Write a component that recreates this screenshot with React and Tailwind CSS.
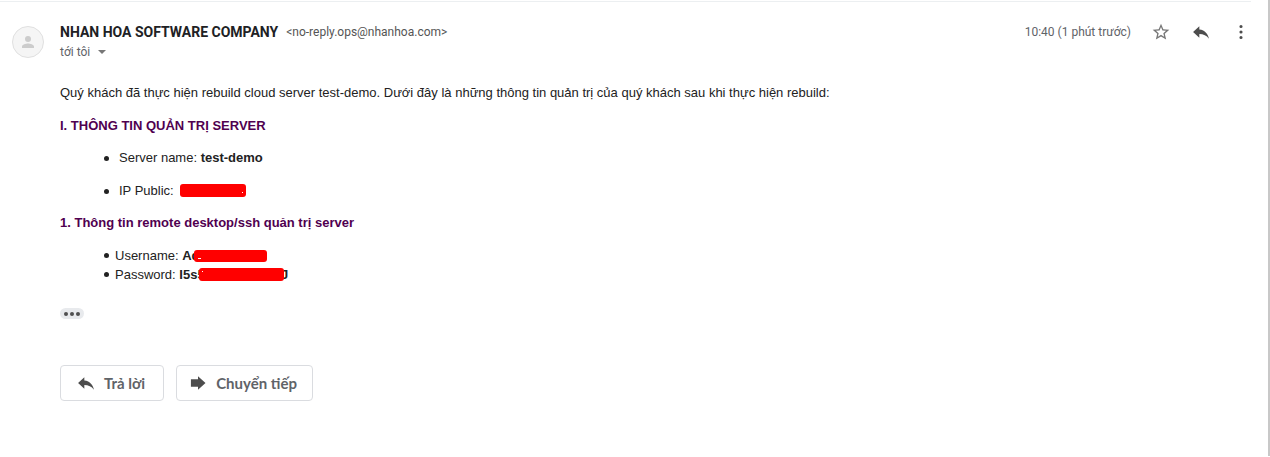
const REPLY_PATH = 'M10 9V5l-7.500 7 7.500 7v-4.500c5 0 8.700 1.800 11.500 5.500-1-5-4.500-10.500-11.500-11z';

function Icon({ path, className = '' }) {
  return (
    <svg viewBox="0 0 24 24" className={`size-5 shrink-0 fill-current ${className}`} aria-hidden="true">
      <path d={path} />
    </svg>
  );
}

function IconButton({ label, path, className = 'text-[#4d4d4d]' }) {
  return (
    <button type="button" aria-label={label} className={`grid size-5 place-items-center ${className}`}>
      <Icon path={path} />
    </button>
  );
}

function Redaction({ children, className, speck }) {
  return (
    <b className="relative inline-block">
      {children}
      <span className={`absolute rounded-[3px] bg-[#ff0000] ${className}`}>
        <span className={`absolute h-px bg-white ${speck}`} />
      </span>
    </b>
  );
}

function Bullet({ gap, children }) {
  return (
    <li className={`flex items-center ${gap}`}>
      <span className="size-[5px] shrink-0 rounded-full bg-[#222222]" />
      <span>{children}</span>
    </li>
  );
}

function ActionButton({ path, className, children }) {
  return (
    <button
      type="button"
      className={`flex h-9 items-center gap-2 rounded border border-[#dadce0] font-['Lato',sans-serif] text-[15px] font-bold text-[#5f6368] ${className}`}
    >
      <Icon path={path} className="text-[#4d4d4d]" />
      {children}
    </button>
  );
}

export default function App() {
  return (
    <div className="flex min-h-screen flex-col bg-white pb-px font-['Roboto',sans-serif] text-[#222222]">
      <div className="flex grow border-r-2 border-[#c8c8c8]">
        <article className="mr-[17px] flex grow flex-col pt-px">
          <div className="border-t border-[#eceff1]" />
          <header className="flex pt-5 pl-3">
            <div className="mt-1 grid size-8 shrink-0 place-items-center rounded-full border border-[#e0e0e0] bg-[#f5f5f5] text-[#cccccc]">
              <svg viewBox="0 0 24 24" className="size-[18px] fill-current" aria-hidden="true">
                <path d="M12 12a4 4 0 1 0 0-8 4 4 0 0 0 0 8zm0 2c-2.700 0-8 1.300-8 4v2h16v-2c0-2.700-5.300-4-8-4z" />
              </svg>
            </div>
            <div className="ml-4 grow">
              <h3 className="flex h-5 items-center gap-2 text-sm font-bold text-[#202124]">
                NHAN HOA SOFTWARE COMPANY
                <span className="text-xs font-normal text-[#555555]">&lt;no-reply.ops@nhanhoa.com&gt;</span>
              </h3>
              <button type="button" className="flex h-5 items-center gap-2 text-xs text-[#5f6368]">
                tới tôi
                <svg viewBox="0 0 8 4" className="h-1 w-2 fill-[#777777]" aria-hidden="true">
                  <path d="M0 0h8L4 4z" />
                </svg>
              </button>
            </div>
            <div className="flex h-5 items-center gap-5 text-xs text-[#5f6368]">
              <time>10:40 (1 phút trước)</time>
              <IconButton
                label="Gắn dấu sao"
                className="text-[#777777]"
                path="M22 9.240l-7.190-.62L12 2 9.190 8.630 2 9.240l5.460 4.730L5.820 21 12 17.270 18.180 21l-1.630-7.030L22 9.240zM12 15.400l-3.760 2.270 1-4.280-3.320-2.880 4.380-.38L12 6.100l1.710 4.040 4.380.38-3.320 2.880 1 4.280L12 15.400z"
              />
              <IconButton label="Trả lời" path={REPLY_PATH} />
              <IconButton
                label="Khác"
                path="M12 7.300a1.900 1.900 0 1 0 0-3.800 1.900 1.900 0 0 0 0 3.800zm0 2.800a1.900 1.900 0 1 0 0 3.800 1.900 1.900 0 0 0 0-3.800zm0 6.600a1.900 1.900 0 1 0 0 3.800 1.900 1.900 0 0 0 0-3.800z"
              />
            </div>
          </header>

          <div className="pt-[21px] pl-[60px] font-['Liberation_Sans',Arial,sans-serif] text-[13px] leading-5">
            <p>
              Quý khách đã thực hiện rebuild cloud server test-demo. Dưới đây là những thông tin quản trị của quý khách
              sau khi thực hiện rebuild:
            </p>
            <h4 className="mt-[13px] font-bold text-[#500050]">I. THÔNG TIN QUẢN TRỊ SERVER</h4>
            <ul className="mt-3 flex flex-col gap-[13px] pl-11">
              <Bullet gap="gap-2.5">
                Server name: <b>test-demo</b>
              </Bullet>
              <Bullet gap="gap-2.5">
                IP Public:{' '}
                <Redaction className="top-[3px] left-[3px] h-[13px] w-[66px]" speck="right-[3px] bottom-1 w-px">
                  &nbsp;
                </Redaction>
              </Bullet>
            </ul>
            <h4 className="mt-3 font-bold text-[#500050]">1. Thông tin remote desktop/ssh quản trị server</h4>
            <ul className="mt-[13px] flex flex-col pl-11 leading-[19px]">
              <Bullet gap="gap-1.5">
                Username:{' '}
                <Redaction className="top-1 left-3 h-3 w-[73px]" speck="bottom-[3px] left-1 w-[3px]">
                  Ad
                </Redaction>
              </Bullet>
              <Bullet gap="gap-1.5">
                Password:{' '}
                <Redaction className="top-[3px] left-5 h-[13px] w-[85px]" speck="top-[3px] left-[3px] w-px">
                  <span className="flex w-[109px] justify-between">
                    <span>I5s5</span>
                    <span>J</span>
                  </span>
                </Redaction>
              </Bullet>
            </ul>
            <button
              type="button"
              aria-label="Hiện nội dung bị cắt bớt"
              className="mt-6 flex h-[11px] w-6 items-center justify-center gap-0.5 rounded-full bg-[#e8eaed]"
            >
              <span className="size-1 rounded-full bg-[#505050]" />
              <span className="size-1 rounded-full bg-[#505050]" />
              <span className="size-1 rounded-full bg-[#505050]" />
            </button>
          </div>

          <footer className="flex gap-3 pt-[46px] pl-[60px]">
            <ActionButton path={REPLY_PATH} className="pr-[18px] pl-[15px]">
              Trả lời
            </ActionButton>
            <ActionButton path="M3.500 7.400h8.500V4l9 8-9 8v-3.400H3.500z" className="pr-[15px] pl-[11px]">
              Chuyển tiếp
            </ActionButton>
          </footer>
        </article>
      </div>
    </div>
  );
}
